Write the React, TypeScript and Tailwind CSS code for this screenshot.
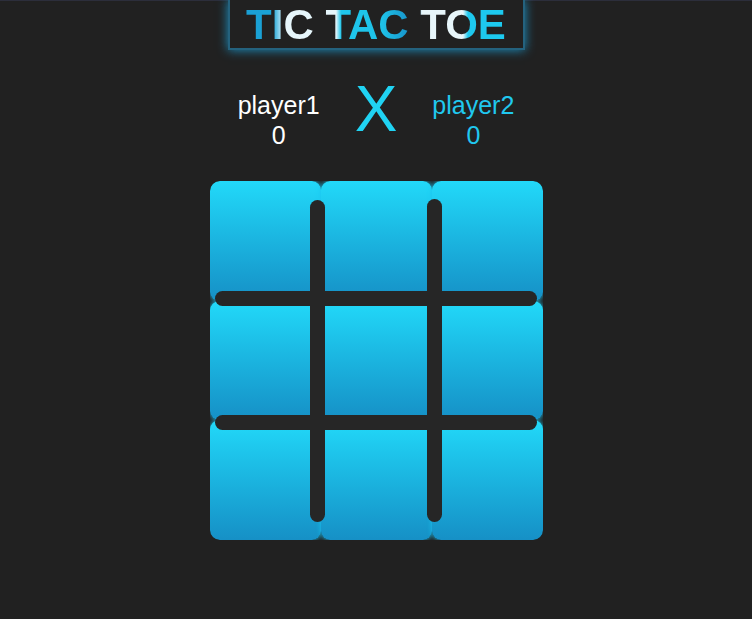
import React from "react";

const titleGradient =
  "linear-gradient(90deg, #1a9fd4 0px, #1aa3d6 27px, #e6f6fb 38px, #e6f6fb 90px, #1fc6ec 95px, #1ec2e8 136px, #1896cc 162px, #1896cc 170px, #e8f6fa 176px, #e8f6fa 217px, #1ec8ee 222px, #1ccbf0 270px)";

export default function App() {
  const cells = Array.from({ length: 9 });
  return (
    <div
      className="min-h-[619px] w-full bg-[#212121] border-t border-[#2c2e3b] flex flex-col items-center"
      style={{ fontFamily: '"Liberation Sans", Arial, sans-serif' }}
    >
      <div className="mt-[-1px] w-[297px] h-[50px] border-2 border-t-0 border-[#24627e] shadow-[0_0_10px_#1a8fc0] bg-[#212121] flex items-center justify-center">
        <span
          className="text-[42px] font-bold leading-none pt-[1px]"
          style={{
            backgroundImage: titleGradient,
            WebkitBackgroundClip: "text",
            backgroundClip: "text",
            color: "transparent",
          }}
        >
          TIC TAC TOE
        </span>
      </div>

      <div className="mt-[27px] flex items-start gap-[35px]">
        <div className="mt-[13px] flex flex-col items-center text-[25px] leading-[30px] text-white">
          <span>player1</span>
          <span>0</span>
        </div>
        <div className="text-[64px] leading-[64px] text-[#20d3f3]">X</div>
        <div className="mt-[13px] flex flex-col items-center text-[25px] leading-[30px] text-[#20c8ef]">
          <span>player2</span>
          <span>0</span>
        </div>
      </div>

      <div className="relative mt-[31px] grid grid-cols-[111px_111px_111px] grid-rows-[120px_119px_120px] rounded-[10px] overflow-hidden">
        {cells.map((_, i) => (
          <div
            key={i}
            className="rounded-[9px] bg-gradient-to-b from-[#22d9f9] to-[#1690c6] shadow-[0_0_5px_#1cc4f0]"
          />
        ))}
        <div className="absolute left-[100px] top-[19px] w-[15px] h-[322px] rounded-full bg-[#262626]" />
        <div className="absolute left-[217px] top-[18px] w-[15px] h-[323px] rounded-full bg-[#262626]" />
        <div className="absolute left-[5px] top-[110px] w-[322px] h-[15px] rounded-full bg-[#262626]" />
        <div className="absolute left-[5px] top-[234px] w-[322px] h-[15px] rounded-full bg-[#262626]" />
      </div>
    </div>
  );
}
